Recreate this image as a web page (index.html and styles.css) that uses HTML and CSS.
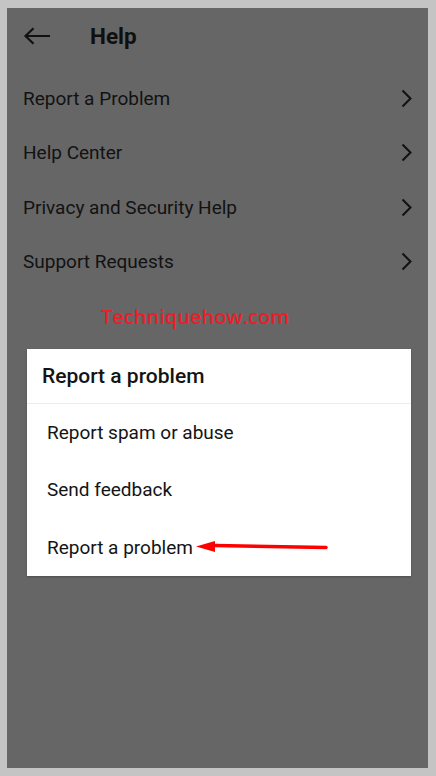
FILE: index.html
```html
<!DOCTYPE html>
<html>
  <head>
    <title>Help</title>
    <link rel="stylesheet" href="styles.css">
  </head>
  <body>
    <div class="screen">
      <div class="header">
        <svg class="back" width="28" height="18" viewBox="0 0 28 18">
          <path d="M27 9H2.5M10.5 1.2L2.5 9l8 7.8" fill="none" stroke="#111" stroke-width="2.2"/>
        </svg>
        <h1>Help</h1>
      </div>
      <ul class="menu">
        <li>Report a Problem
          <svg width="11" height="19" viewBox="0 0 11 19"><path d="M1.5 1.5l8 8-8 8" fill="none" stroke="#111" stroke-width="2"/></svg>
        </li>
        <li>Help Center
          <svg width="11" height="19" viewBox="0 0 11 19"><path d="M1.5 1.5l8 8-8 8" fill="none" stroke="#111" stroke-width="2"/></svg>
        </li>
        <li>Privacy and Security Help
          <svg width="11" height="19" viewBox="0 0 11 19"><path d="M1.5 1.5l8 8-8 8" fill="none" stroke="#111" stroke-width="2"/></svg>
        </li>
        <li>Support Requests
          <svg width="11" height="19" viewBox="0 0 11 19"><path d="M1.5 1.5l8 8-8 8" fill="none" stroke="#111" stroke-width="2"/></svg>
        </li>
      </ul>
      <div class="watermark">Techniquehow.com</div>
      <div class="dialog">
        <div class="dialog-title">Report a problem</div>
        <div class="option">Report spam or abuse</div>
        <div class="option">Send feedback</div>
        <div class="option">Report a problem
          <svg class="pointer" width="134" height="14" viewBox="0 0 134 14">
            <path d="M20 5.5L131 7.5" stroke="#f00" stroke-width="3.5" stroke-linecap="round"/>
            <path d="M1 6.5L20 1v11z" fill="#f00"/>
          </svg>
        </div>
      </div>
    </div>
  </body>
</html>
```

FILE: styles.css
```css
body {
  margin: 0;
  background: #c4c4c4;
  font-family: Roboto, "Liberation Sans", sans-serif;
}
.screen {
  margin: 8px 8px 8px 7px;
  height: 760px;
  background: #666;
  color: #121212;
}
.header {
  height: 56px;
  display: flex;
  align-items: center;
  padding-left: 16px;
}
.header h1 {
  margin: 0 0 0 39px;
  font-size: 22.5px;
  font-weight: 700;
  color: #0f0f0f;
}
.menu {
  list-style: none;
  margin: 7px 0 0;
  padding: 0;
}
.menu li {
  height: 54.5px;
  display: flex;
  align-items: center;
  justify-content: space-between;
  padding: 0 16px;
  font-size: 19px;
}
.watermark {
  margin-top: 9px;
  height: 38px;
  line-height: 38px;
  padding-left: 94px;
  font-family: "Open Sans", sans-serif;
  font-weight: 600;
  font-size: 20px;
  color: #e8202a;
}
.dialog {
  margin: 13px 17px 0 20px;
  background: #fff;
  box-shadow: 0 1px 2px rgba(0, 0, 0, 0.25);
  color: #141414;
}
.dialog-title {
  height: 54px;
  display: flex;
  align-items: center;
  padding-left: 15px;
  font-size: 21px;
  font-weight: 500;
  border-bottom: 1px solid #ececec;
}
.option {
  height: 57.3px;
  display: flex;
  align-items: center;
  padding-left: 20px;
  font-size: 19px;
}
.pointer {
  margin-left: 2px;
}
```
